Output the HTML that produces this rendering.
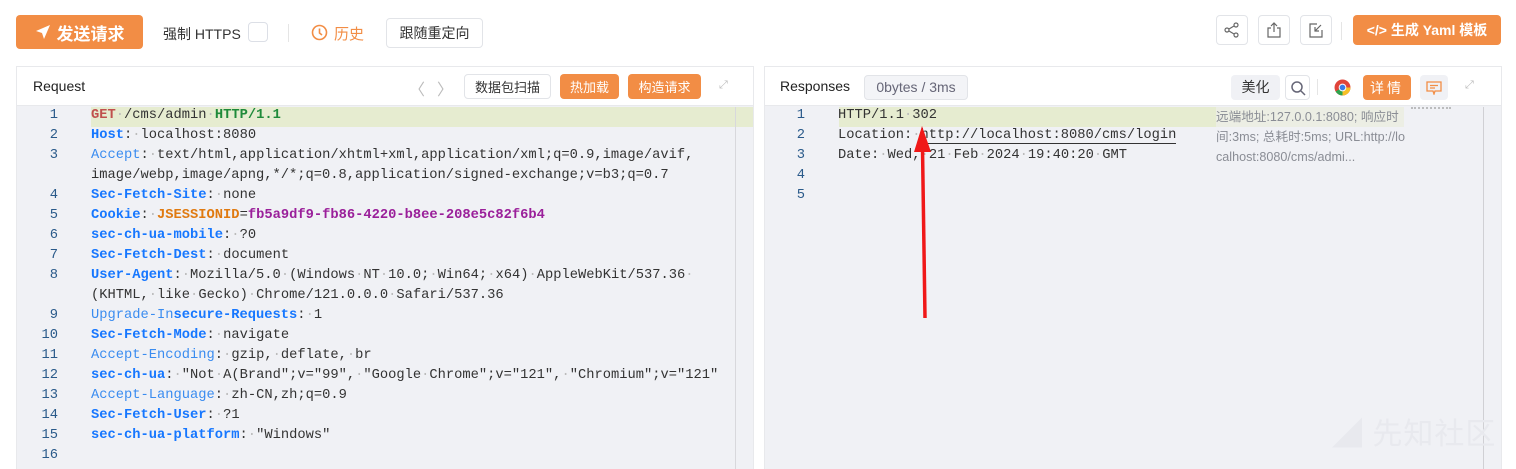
<!DOCTYPE html>
<html><head><meta charset="utf-8"><style>
*{box-sizing:border-box;margin:0;padding:0}
html,body{width:1516px;height:469px;overflow:hidden}
body{background:#fff;font-family:"Liberation Sans","Noto Sans CJK SC",sans-serif;position:relative;color:#333}
.abs{position:absolute}
.obtn{position:absolute;background:#f28d45;color:#fff;border-radius:4px;display:flex;align-items:center;justify-content:center}
.wbtn{position:absolute;background:#fff;border:1px solid #e2e4e8;border-radius:4px;display:flex;align-items:center;justify-content:center;font-size:14px;color:#333}
.panel{position:absolute;top:66px;height:404px;border:1px solid #e8e9ec;background:#f0f1f5;overflow:hidden}
.phead{position:absolute;left:0;top:0;right:0;height:39px;background:#fff;border-bottom:1px solid #e8e9ec}
.code{position:absolute;font-family:"Liberation Mono",monospace;font-size:13.75px;line-height:20px;white-space:pre;color:#333}
.ln{position:absolute;font-family:"Liberation Mono",monospace;font-size:13.75px;line-height:20px;color:#2a5a8a;text-align:right;width:40px;white-space:pre}
.k{color:#1677ff;font-weight:bold}.kn{color:#3a8cf0}
.d{color:#bbb}
.r{color:#c0504d;font-weight:bold}.g{color:#1f8a3a;font-weight:bold}
.o{color:#e07a10;font-weight:bold}.p{color:#9a1f9a;font-weight:bold}
</style></head><body>
<div class="obtn" style="left:16px;top:15px;width:127px;height:34px;font-size:17px;font-weight:bold"><svg width="16" height="16" viewBox="0 0 16 16" style="margin-right:6px"><path d="M15 1 L1 7 L7 9 L9 15 Z" fill="#fff"/></svg>发送请求</div>
<div class="abs" style="left:163px;top:24px;font-size:14px">强制 HTTPS</div>
<div class="abs" style="left:248px;top:22px;width:20px;height:20px;border:1px solid #dcdfe6;border-radius:4px"></div>
<div class="abs" style="left:288px;top:24px;width:1px;height:18px;background:#e5e5e5"></div>
<svg class="abs" style="left:311px;top:24px" width="17" height="17" viewBox="0 0 17 17"><circle cx="8.5" cy="8.5" r="7" fill="none" stroke="#f28d45" stroke-width="1.6"/><path d="M8.5 4.5V9l2.5 2" fill="none" stroke="#f28d45" stroke-width="1.6"/></svg>
<div class="abs" style="left:334px;top:23px;font-size:15px;color:#f28d45">历史</div>
<div class="wbtn" style="left:386px;top:18px;width:97px;height:30px">跟随重定向</div>

<div class="wbtn" style="left:1216px;top:15px;width:32px;height:30px"><svg width="18" height="18" viewBox="0 0 18 18" fill="none" stroke="#666" stroke-width="1.2"><circle cx="13" cy="4" r="2"/><circle cx="4" cy="9" r="2"/><circle cx="13" cy="14" r="2"/><path d="M6 8l5-3M6 10l5 3"/></svg></div>
<div class="wbtn" style="left:1258px;top:15px;width:32px;height:30px"><svg width="18" height="18" viewBox="0 0 18 18" fill="none" stroke="#666" stroke-width="1.2"><path d="M6 7H3v9h12V7h-3M9 11V2M6 5l3-3 3 3"/></svg></div>
<div class="wbtn" style="left:1300px;top:15px;width:32px;height:30px"><svg width="18" height="18" viewBox="0 0 18 18" fill="none" stroke="#666" stroke-width="1.2"><path d="M10 3H3v13h12V9M14 4l-6 6M8 6v4h4"/></svg></div>
<div class="abs" style="left:1341px;top:22px;width:1px;height:18px;background:#e5e5e5"></div>
<div class="obtn" style="left:1353px;top:15px;width:148px;height:30px;font-size:14px;font-weight:bold">&lt;/&gt; 生成 Yaml 模板</div>

<div class="panel" style="left:16px;width:738px">
 <div class="phead">
  <div class="abs" style="left:16px;top:11px;font-size:14px;color:#222">Request</div>
  <div class="abs" style="left:392px;top:9px;font-size:16px;color:#bbb">〈</div>
  <div class="abs" style="left:420px;top:9px;font-size:16px;color:#bbb">〉</div>
  <div class="wbtn" style="left:447px;top:7px;width:87px;height:25px;font-size:13px">数据包扫描</div>
  <div class="obtn" style="left:543px;top:7px;width:59px;height:25px;font-size:13px">热加载</div>
  <div class="obtn" style="left:611px;top:7px;width:73px;height:25px;font-size:13px">构造请求</div>
  <div class="abs" style="left:702px;top:12px;font-size:11px;color:#bbb">⤢</div>
 </div>
 <div class="abs" style="left:74px;top:40px;width:662px;height:20px;background:#e6ecd0"></div>
 <div class="abs" style="left:718px;top:40px;width:1px;height:370px;background:#d8d8dc"></div>
</div>
<div class="ln" style="left:18px;top:106px">1
2
3

4
5
6
7
8

9
10
11
12
13
14
15
16</div>
<div class="code" style="left:91px;top:106px"><span class="r">GET</span><span class="d">·</span>/cms/admin<span class="d">·</span><span class="g">HTTP/1.1</span>
<span class="k">Host</span>:<span class="d">·</span>localhost:8080
<span class="kn">Accept</span>:<span class="d">·</span>text/html,application/xhtml+xml,application/xml;q=0.9,image/avif,
image/webp,image/apng,*/*;q=0.8,application/signed-exchange;v=b3;q=0.7
<span class="k">Sec-Fetch-Site</span>:<span class="d">·</span>none
<span class="k">Cookie</span>:<span class="d">·</span><span class="o">JSESSIONID</span>=<span class="p">fb5a9df9-fb86-4220-b8ee-208e5c82f6b4</span>
<span class="k">sec-ch-ua-mobile</span>:<span class="d">·</span>?0
<span class="k">Sec-Fetch-Dest</span>:<span class="d">·</span>document
<span class="k">User-Agent</span>:<span class="d">·</span>Mozilla/5.0<span class="d">·</span>(Windows<span class="d">·</span>NT<span class="d">·</span>10.0;<span class="d">·</span>Win64;<span class="d">·</span>x64)<span class="d">·</span>AppleWebKit/537.36<span class="d">·</span>
(KHTML,<span class="d">·</span>like<span class="d">·</span>Gecko)<span class="d">·</span>Chrome/121.0.0.0<span class="d">·</span>Safari/537.36
<span class="kn">Upgrade-In</span><span class="k">secure-Requests</span>:<span class="d">·</span>1
<span class="k">Sec-Fetch-Mode</span>:<span class="d">·</span>navigate
<span class="kn">Accept-Encoding</span>:<span class="d">·</span>gzip,<span class="d">·</span>deflate,<span class="d">·</span>br
<span class="k">sec-ch-ua</span>:<span class="d">·</span>"Not<span class="d">·</span>A(Brand";v="99",<span class="d">·</span>"Google<span class="d">·</span>Chrome";v="121",<span class="d">·</span>"Chromium";v="121"
<span class="kn">Accept-Language</span>:<span class="d">·</span>zh-CN,zh;q=0.9
<span class="k">Sec-Fetch-User</span>:<span class="d">·</span>?1
<span class="k">sec-ch-ua-platform</span>:<span class="d">·</span>"Windows"
</div>

<div class="panel" style="left:764px;width:738px">
 <div class="phead">
  <div class="abs" style="left:15px;top:11px;font-size:14px;color:#222">Responses</div>
  <div class="abs" style="left:99px;top:8px;width:104px;height:25px;border:1px solid #e2e4e8;background:#f3f4f7;border-radius:4px;font-size:14px;color:#667;text-align:center;line-height:23px">0bytes / 3ms</div>
  <div class="abs" style="left:466px;top:8px;width:49px;height:25px;background:#f0f1f5;border-radius:4px;font-size:14px;text-align:center;line-height:25px">美化</div>
  <div class="wbtn" style="left:520px;top:8px;width:25px;height:25px"><svg width="16" height="16" viewBox="0 0 16 16" fill="none" stroke="#667" stroke-width="1.5"><circle cx="7" cy="7" r="5"/><path d="M11 11l4 4"/></svg></div>
  <div class="abs" style="left:552px;top:12px;width:1px;height:16px;background:#e5e5e5"></div>
  <svg class="abs" style="left:569px;top:12px" width="17" height="17" viewBox="0 0 16 16"><circle cx="8" cy="8" r="7.5" fill="#e0443a"/><path d="M8 8L1.5 11.7A7.5 7.5 0 0 0 8 15.5z" fill="#2da44e"/><path d="M8 8L15.5 8A7.5 7.5 0 0 1 8 15.5z" fill="#f6c026"/><circle cx="8" cy="8" r="3.6" fill="#fff"/><circle cx="8" cy="8" r="2.7" fill="#3b7be8"/></svg>
  <div class="obtn" style="left:598px;top:8px;width:48px;height:25px;font-size:14px;letter-spacing:3px">详情</div>
  <div class="abs" style="left:655px;top:8px;width:28px;height:25px;background:#f0f1f5;border-radius:4px"><svg style="margin:6px 0 0 6px" width="16" height="14" viewBox="0 0 16 14" fill="none" stroke="#f28d45" stroke-width="1.3"><path d="M1 1h14v9H9l-1 3-1-3H1z M4 4.5h8M4 7h5"/></svg></div>
  <div class="abs" style="left:700px;top:12px;font-size:11px;color:#bbb">⤢</div>
 </div>
 <div class="abs" style="left:74px;top:40px;width:377px;height:20px;background:#e6ecd0"></div>
 <div class="abs" style="left:451px;top:40px;width:188px;height:20px;background:#eceee4"></div>
 <div class="abs" style="left:646px;top:40px;width:40px;height:4px;border-top:2px dotted #999;opacity:.6"></div>
 <div class="abs" style="left:718px;top:40px;width:1px;height:370px;background:#d0d0d4"></div>
 <div class="abs" style="left:451px;top:40px;width:192px;font-size:12.6px;line-height:20px;color:#8a8d95;word-break:break-all">远端地址:127.0.0.1:8080; 响应时间:3ms; 总耗时:5ms; URL:http://localhost:8080/cms/admi...</div>
 <div class="abs" style="left:567px;top:348px;font-size:30px;line-height:40px;white-space:nowrap;color:#e8e9ee;letter-spacing:1px">◢ 先知社区</div>
</div>
<div class="ln" style="left:765px;top:106px">1
2
3
4
5</div>
<div class="code" style="left:838px;top:106px">HTTP/1.1<span class="d">·</span>302
Location:<span class="d">·</span><span style="border-bottom:1px solid #333">http://localhost:8080/cms/login</span>
Date:<span class="d">·</span>Wed,<span class="d">·</span>21<span class="d">·</span>Feb<span class="d">·</span>2024<span class="d">·</span>19:40:20<span class="d">·</span>GMT
</div>
<svg class="abs" style="left:900px;top:120px" width="50" height="210"><path d="M25 198 L22.5 28" stroke="#f01818" stroke-width="3.5" fill="none"/><path d="M22 6 L14 32 L31 32 Z" fill="#f01818"/></svg>
</body></html>
